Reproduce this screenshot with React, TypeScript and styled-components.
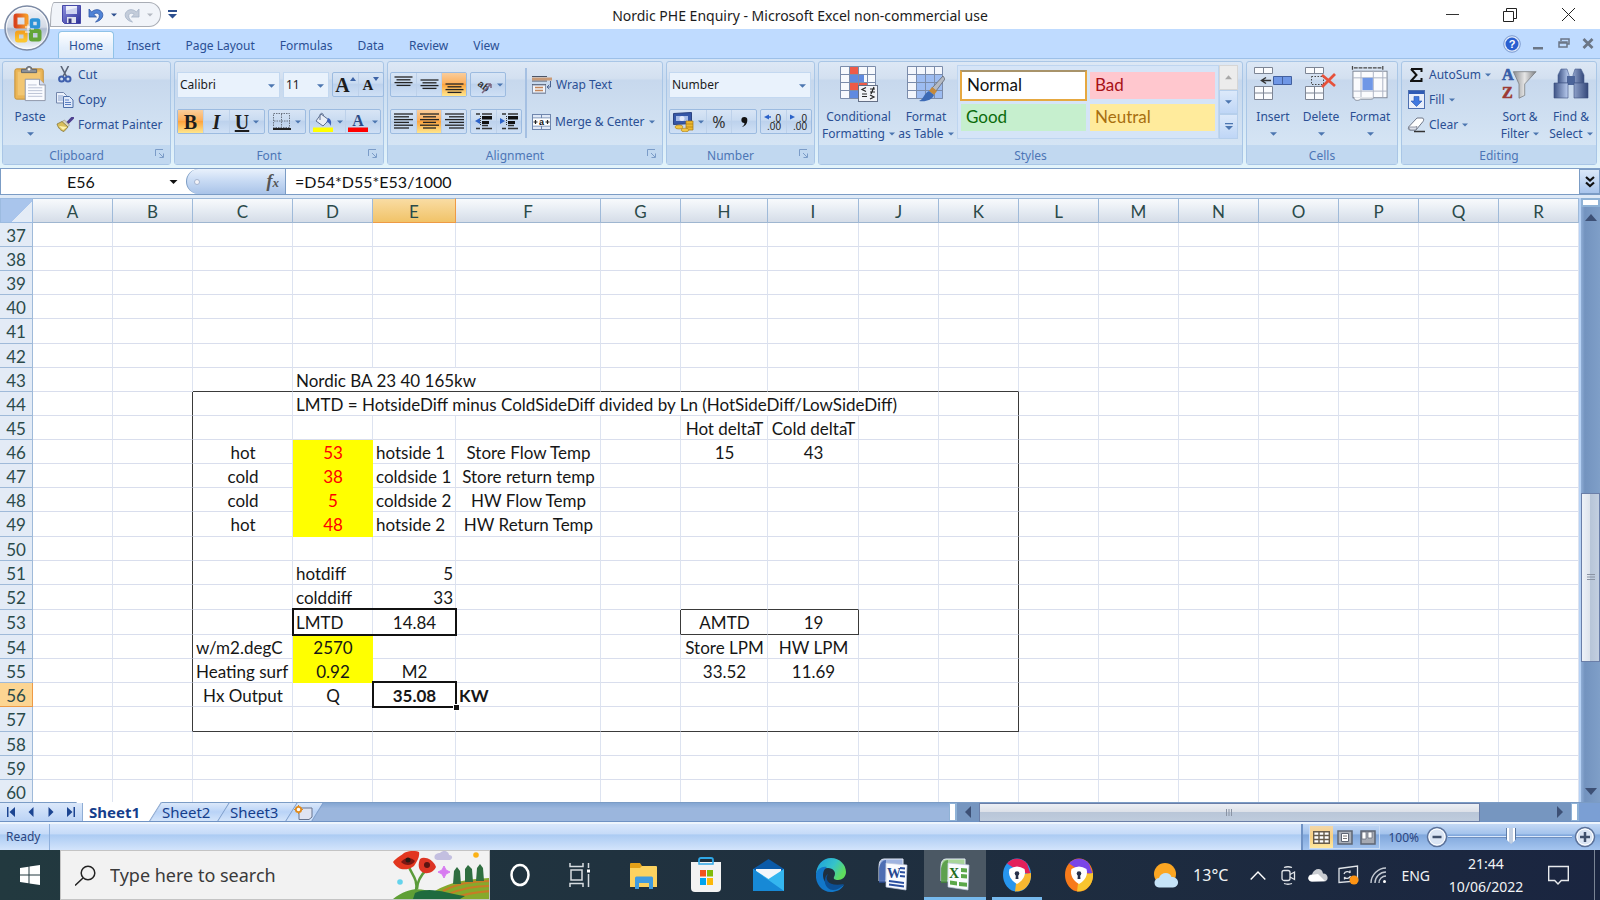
import React from 'react';
import styled, { createGlobalStyle, css } from 'styled-components';

const UI = '"Noto Sans", "Open Sans", sans-serif';
const SHEET = 'Lato, "Liberation Sans", sans-serif';

const GlobalStyle = createGlobalStyle`
  *, *::before, *::after { box-sizing: border-box; }
  body { margin: 0; font-family: ${UI}; font-size: 12px; color: #1e3f7c; background: #fff; }
  button, input, select { font: inherit; color: inherit; margin: 0; padding: 0; border: 0; background: none; border-radius: 0; outline: none; }
  button { cursor: default; }
  svg { display: block; flex: none; }
`;

const Window = styled.div`
  display: flex;
  flex-direction: column;
  height: 100vh;
  min-width: 1200px;
  overflow: hidden;
`;

/* ---------- title bar ---------- */
const TitleBar = styled.header`
  position: relative;
  display: flex;
  align-items: center;
  justify-content: space-between;
  height: 29px;
  flex: none;
  background: #fff;
`;
const OfficeButton = styled.button`
  position: absolute;
  z-index: 2;
  left: 4px;
  top: 5px;
  width: 46px;
  height: 46px;
`;
const QuickAccess = styled.div`
  display: flex;
  align-items: center;
  width: 177px;
  padding-left: 50px;
`;
const QuickPill = styled.div`
  display: flex;
  align-items: center;
  gap: 7px;
  width: 111px;
  height: 25px;
  padding-left: 11px;
  margin-right: 7px;
  background: #f1f4f9;
  border: 1px solid #a9adb5;
  border-radius: 4px 12px 12px 0 / 24px 12px 12px 0;
`;
const PlainButton = styled.button`
  display: flex;
  align-items: center;
  justify-content: center;
`;
const WindowTitle = styled.h1`
  flex: 1;
  margin: 0;
  padding-top: 2px;
  font-size: 14px;
  font-weight: 400;
  line-height: 24px;
  text-align: center;
  color: #1c1c1c;
  white-space: nowrap;
`;
const CaptionButtons = styled.div`
  display: flex;
  padding-right: 3px;
  button { width: 58px; height: 28px; }
`;

/* ---------- ribbon tabs ---------- */
const TabBar = styled.nav`
  display: flex;
  justify-content: space-between;
  height: 29px;
  flex: none;
  padding-left: 58px;
  background: #bfdbff;
`;
const TabList = styled.div`
  display: flex;
  gap: 1px;
  padding-top: 2px;
`;
const RibbonTab = styled.button<{ $active?: boolean }>`
  padding: 2px 12px 0;
  line-height: 24px;
  color: #2a4f94;
  ${p => p.$active && css`
    padding: 2px 10px 0;
    background: linear-gradient(#fff, #e3eefb 60%, #dbe8f8);
    border: 1px solid #90c3e8;
    border-bottom: 0;
    border-radius: 4px 4px 0 0;
  `}
`;
const DocButtons = styled.div`
  display: flex;
  align-items: center;
  gap: 12px;
  padding-right: 6px;
`;

/* ---------- ribbon ---------- */
const Ribbon = styled.section`
  display: flex;
  gap: 3px;
  flex: none;
  padding: 2px 3px 3px 2px;
  background: linear-gradient(#d4e4f6, #c9dbf0 20%, #e3f4fb);
  border-top: 1px solid #9dc0e8;
  border-bottom: 1px solid #7f9fc8;
`;
const Group = styled.div<{ $w?: number }>`
  display: flex;
  flex-direction: column;
  ${p => p.$w ? css`flex: 0 0 ${p.$w}px;` : css`flex: 1 1 0;`}
  min-width: 0;
  border: 1px solid #a9c6e6;
  border-radius: 3px;
  background: linear-gradient(#dde8f5, #d3e0f0 16%, #c7d8ed 18%, #d9e8f6);
`;
const GroupBody = styled.div<{ $tools?: boolean }>`
  display: flex;
  height: 83px;
  padding: ${p => (p.$tools ? '10px 2px 0' : '0 3px')};
`;
const GroupLabel = styled.div<{ $launch?: boolean }>`
  display: flex;
  align-items: center;
  justify-content: center;
  position: relative;
  height: 19px;
  padding: 2px ${p => (p.$launch ? 20 : 0)}px 0 0;
  line-height: 17px;
  color: #4d76b6;
  background: #c1d8f0;
`;
const Launcher = styled.button`
  position: absolute;
  right: 5px;
  top: 4px;
`;
const Stack = styled.div<{ $gap?: number }>`
  display: flex;
  flex-direction: column;
  gap: ${p => p.$gap ?? 0}px;
`;
const ToolRow = styled.div`
  display: flex;
  gap: 3px;
  height: 25px;
`;
const BigButton = styled.button<{ $w: number }>`
  display: flex;
  flex-direction: column;
  align-items: center;
  width: ${p => p.$w}px;
  padding-top: 4px;
  line-height: 18px;
  color: #2a4f94;
  white-space: nowrap;
  > svg { height: 36px; margin-bottom: 6px; }
`;
const BigLine = styled.span`
  display: flex;
  align-items: center;
  justify-content: center;
  gap: 4px;
  height: 17px;
`;
const SmallButton = styled.button`
  display: flex;
  align-items: center;
  gap: 4px;
  height: 25px;
  padding-left: 2px;
  color: #2a4f94;
  white-space: nowrap;
`;
const SmallIcon = styled.span`
  display: flex;
  justify-content: center;
  width: 18px;
`;
const Segment = styled.div`
  display: flex;
  border: 1px solid #9cbbe0;
  border-radius: 2px;
  background: linear-gradient(#d8e5f5, #c9dbf1 45%, #bcd1ec 47%, #cfe0f5);
`;
const Tool = styled.button<{ $w?: number; $on?: boolean }>`
  display: flex;
  align-items: center;
  justify-content: center;
  gap: 4px;
  width: ${p => p.$w ?? 25}px;
  height: 100%;
  & + & { border-left: 1px solid #bdd1ea; }
  ${p => p.$on && css`background: linear-gradient(#f9cd9c, #fdb05c 45%, #fca43f 50%, #ffe68c);`}
`;
const Glyph = styled.span<{ $italic?: boolean; $underline?: boolean; $size?: number }>`
  font-family: "Liberation Serif", serif;
  font-weight: 700;
  font-size: ${p => p.$size ?? 20}px;
  line-height: 20px;
  color: #1d1d1d;
  font-style: ${p => (p.$italic ? 'italic' : 'normal')};
  text-decoration: ${p => (p.$underline ? 'underline' : 'none')};
`;
const PlainGlyph = styled.span`
  font-size: 16px;
  line-height: 24px;
  color: #333;
`;
const SelectBox = styled.div<{ $w: number }>`
  position: relative;
  width: ${p => p.$w}px;
  height: 26px;
  background: #e9f2fc;
  border: 1px solid #c3d8f0;
  select {
    appearance: none;
    width: 100%;
    height: 22px;
    padding-left: 2px;
    font-size: 12px;
    color: #1c1c1c;
  }
  svg { position: absolute; right: 4px; top: 11px; pointer-events: none; }
`;
const Divider = styled.div`
  width: 2px;
  height: 70px;
  margin: -4px 3px 0;
  background: #a5c0e2;
`;
const Gallery = styled.div`
  display: grid;
  flex: 1;
  grid-template-columns: 1fr 1fr;
  grid-auto-rows: 31px;
  gap: 1px 2px;
  height: 74px;
  margin: 3px 0 0;
  padding: 4px 2px;
  border: 1px solid #bed5f0;
  background: #d5e4f7;
`;
const StyleSwatch = styled.button<{ $bg: string; $fg: string; $on?: boolean }>`
  margin: 2px 1px;
  padding: 0 0 2px 5px;
  text-align: left;
  font-family: ${SHEET};
  font-size: 17px;
  background: ${p => p.$bg};
  color: ${p => p.$fg};
  ${p => p.$on && css`margin: 0; border: 2px solid #e6a840; border-top-color: #a8936a;`}
`;
const GalleryScroll = styled.div`
  display: grid;
  grid-template-rows: repeat(3, 1fr);
  width: 19px;
  height: 74px;
  margin: 3px 1px 0 0;
  button { border: 1px solid #b6cfec; background: linear-gradient(#dce9fa, #bfd6f6); }
  button:first-child { background: #ececec; border-color: #d6d6d6; }
`;

/* ---------- formula bar ---------- */
const FormulaBar = styled.section`
  display: flex;
  height: 26px;
  flex: none;
  font-family: ${SHEET};
  font-size: 16px;
  color: #111;
  background: #fff;
  border-bottom: 1px solid #7b9cc5;
`;
const NameBox = styled.div`
  display: flex;
  align-items: center;
  width: 186px;
  border-left: 1px solid #7b9cc5;
  input { width: 160px; text-align: center; }
  button { width: 26px; height: 24px; }
  svg { margin: auto; }
`;
const FxArea = styled.div`
  display: flex;
  align-items: center;
  justify-content: space-between;
  width: 100px;
  padding: 0 6px 0 7px;
  border: 1px solid #7b9cc5;
  border-width: 0 1px;
  border-radius: 13px 0 0 13px;
  background: linear-gradient(#e9f1fc, #c6d9f3 50%, #a9c3e8);
`;
const FxKnob = styled.span`
  width: 6px;
  height: 6px;
  border-radius: 50%;
  background: #f4f4f8;
  border: 1px solid #a5b4cf;
`;
const FxButton = styled.button`
  font-family: "Liberation Serif", serif;
  font-style: italic;
  font-weight: 700;
  font-size: 18px;
  line-height: 20px;
  color: #555;
  small { font-size: 13px; }
`;
const FormulaInput = styled.input`
  flex: 1;
  && { padding-left: 9px; }
`;
const ExpandButton = styled.button`
  && { width: 21px; border: 1px solid #7b9cc5; background: linear-gradient(#dbe8f9, #a9c5ec); }
  svg { margin: auto; }
`;

/* ---------- worksheet ---------- */
const SheetArea = styled.main`
  display: flex;
  flex: 1;
  min-height: 0;
  padding-top: 3px;
  background: #dfeaf7;
`;
const GridPane = styled.div`
  flex: 1;
  min-width: 0;
  overflow: hidden;
  background: #fff;
`;
const Grid = styled.table`
  width: 1579px;
  table-layout: fixed;
  border-collapse: separate;
  border-spacing: 0;
  font-family: ${SHEET};
  font-size: 17px;
  line-height: 20px;
  color: #161616;
  th, td { padding: 2px 0 0; font-weight: 400; }
`;
const Corner = styled.th`
  height: 25px;
  background: linear-gradient(135deg, #a9c5ec 62%, #e4ecf6 62%);
  border: 1px solid #9cbbe0;
`;
const ColHead = styled.th<{ $on?: boolean }>`
  height: 25px;
  color: #2b4a4a;
  background: linear-gradient(#f8fafc, #e6ecf3 50%, #d5dde8);
  border-top: 1px solid #9cb8d8;
  border-right: 1px solid #9fbad9;
  border-bottom: 1px solid #9fb6d0;
  ${p => p.$on && css`
    background: linear-gradient(#f9dca3, #f1c368);
    border-bottom-color: #ee9a45;
    border-right-color: #ee9a45;
  `}
`;
const Row = styled.tr<{ $h: number }>`
  height: ${p => p.$h}px;
`;
const RowHead = styled.th<{ $on?: boolean }>`
  color: #2b4a4a;
  background: #e3ebf6;
  border-right: 1px solid #9fbad9;
  border-bottom: 1px solid #9fbad9;
  ${p => p.$on && css`background: #fcd592; border-color: #ee9a45;`}
`;
type CellProps = { $align?: string; $fill?: boolean; $red?: boolean; $bold?: boolean; $right?: string; $bottom?: string; $frame?: string };
const Cell = styled.td<CellProps>`
  position: relative;
  white-space: nowrap;
  text-align: ${p => p.$align ?? 'center'};
  font-weight: ${p => (p.$bold ? 700 : 400)} !important;
  color: ${p => (p.$red ? '#f00' : 'inherit')};
  background: ${p => (p.$fill ? '#ff0' : '#fff')};
  border-right: 1px solid ${p => p.$right ?? (p.$fill ? '#ff0' : '#dde3f0')};
  border-bottom: 1px solid ${p => p.$bottom ?? (p.$fill ? '#ff0' : '#d9deed')};
  && { padding: 2px 2px 0 3px; }
  ${p => p.$frame && css`
    &::after {
      content: '';
      position: absolute;
      z-index: 1;
      inset: -2px -2px -2px ${p.$frame === 'right' ? '0' : '-1px'};
      border: solid #111;
      border-width: 2px ${p.$frame === 'left' ? 0 : 2}px 2px ${p.$frame === 'right' ? 0 : 2}px;
    }
  `}
`;
const FillHandle = styled.span`
  position: absolute;
  z-index: 2;
  right: -4px;
  bottom: -4px;
  width: 5px;
  height: 5px;
  background: #111;
  outline: 1px solid #fff;
`;

/* ---------- scroll bars ---------- */
const VScroll = styled.div`
  display: flex;
  flex-direction: column;
  width: 21px;
  border-left: 2px solid #b7d2f5;
  background: linear-gradient(90deg, #8fadd5, #7393bf 20%, #7f9fc8);
`;
const VSplit = styled.div`
  height: 9px;
  border: 2px solid #8fb2d6;
  background: #fff;
`;
const ArrowButton = styled.button`
  display: flex;
  align-items: center;
  justify-content: center;
  width: 20px;
  height: 22px;
`;
const Track = styled.div<{ $n: number }>`
  flex: ${p => p.$n} 1 0;
`;
const VThumb = styled(Track)`
  display: flex;
  align-items: center;
  justify-content: center;
  border: 1px solid #6a7ea8;
  background: linear-gradient(90deg, #eef2f8, #dfe4ec 45%, #b7c5d8 50%, #c3cfe0);
`;
const HThumb = styled(VThumb)`
  height: 19px;
  background: linear-gradient(#eceff4, #dde1e9 45%, #b9c6d8 50%, #bfccdd);
`;
const SheetBar = styled.nav`
  display: flex;
  height: 20px;
  flex: none;
  border-top: 1px solid #7b9cc5;
  border-bottom: 1px solid #6f92c4;
  background: linear-gradient(#84a6d2, #9bb6dd 30%);
  ${ArrowButton} { height: 18px; }
`;
const TabsPane = styled.div`
  display: flex;
  flex: 949 1 0;
`;
const SheetNav = styled.div`
  display: flex;
  position: relative;
  z-index: 3;
  width: 83px;
  padding-left: 1px;
  background: linear-gradient(#dbe8fa, #bbd3f5);
  border-right: 1px solid #8fadd5;
`;
const SheetTab = styled.button<{ $active?: boolean; $w: number }>`
  position: relative;
  width: ${p => p.$w}px;
  z-index: ${p => (p.$active ? 2 : 1)};
  font-size: 15px;
  line-height: 18px;
  font-weight: ${p => (p.$active ? 700 : 400)};
  color: #153e8c;
  text-align: left;
  && { padding-left: 6px; }
  &::before {
    content: '';
    position: absolute;
    z-index: -1;
    inset: ${p => (p.$active ? '-1px 0 0 -12px' : '0')};
    transform: skewX(-32deg);
    background: ${p => (p.$active ? '#fff' : 'linear-gradient(#dbe8fa, #b9d3f7 50%, #d3e4fa)')};
    border-right: 1px solid #7f9fcc;
  }
`;
const NewSheetTab = styled(SheetTab)`
  && { padding-left: 2px; }
`;
const HScroll = styled.div`
  display: flex;
  flex: 630 1 0;
  background: #7696c0;
  ${ArrowButton} { width: 22px; }
`;
const HSplit = styled.div`
  width: 8px;
  border: 1px solid #8fb2d6;
  border-right-width: 2px;
  background: #fff;
`;
const ScrollCorner = styled.div`
  width: 21px;
  background: #7b9fd4;
`;

/* ---------- status bar ---------- */
const StatusBar = styled.footer`
  display: flex;
  justify-content: space-between;
  height: 28px;
  flex: none;
  color: #2a4580;
  border-top: 2px solid #eef5fd;
  background: linear-gradient(#d9e7fc, #c6dbf8 38%, #abcbf3 42%, #d3e4fb);
`;
const StatusText = styled.div`
  width: 50px;
  padding-left: 6px;
  line-height: 26px;
  border-right: 1px solid #8fb0dc;
`;
const ZoomArea = styled.div`
  display: flex;
  align-items: center;
  padding: 0 4px 0 6px;
  border-left: 2px solid #6f92c4;
  background: linear-gradient(#c3d8f5, #a4c3ec 38%, #80a7dc 42%, #a5c5ef);
`;
const ViewButtons = styled.div`
  display: flex;
  height: 24px;
  margin-right: 8px;
  border: 1px solid #c9dcf5;
`;
const ViewButton = styled.button<{ $on?: boolean }>`
  display: flex;
  align-items: center;
  justify-content: center;
  width: 23px;
  ${p => p.$on && css`&& { background: linear-gradient(#f3d7a8, #f8cf7e 50%, #ffe9a0); }`}
`;
const ZoomButton = styled.button`
  width: 22px;
  height: 22px;
  && { margin-left: 2px; }
  &&:first-of-type { margin-left: 7px; }
`;
const ZoomSlider = styled.input`
  appearance: none;
  width: 124px;
  height: 22px;
  &::-webkit-slider-runnable-track {
    height: 2px;
    background: #dbe8fa;
    border-bottom: 1px solid #6e8fc0;
  }
  &::-webkit-slider-thumb {
    appearance: none;
    width: 10px;
    height: 16px;
    margin-top: -8px;
    background: linear-gradient(90deg, #56749f 1px, #fff 1px 3px, #c2cfe2 3px 7px, #fff 7px 9px, #56749f 9px);
    clip-path: polygon(0 0, 100% 0, 100% 70%, 50% 100%, 0 70%);
  }
`;

/* ---------- taskbar ---------- */
const Taskbar = styled.footer`
  display: flex;
  justify-content: space-between;
  height: 50px;
  flex: none;
  color: #f1f3f5;
  background: linear-gradient(90deg, #22393f, #1f2f3f 55%, #1a2540);
`;
const TaskGroup = styled.div`
  display: flex;
  align-items: center;
`;
const TaskButton = styled.button<{ $w: number; $line?: boolean; $on?: boolean }>`
  position: relative;
  display: flex;
  align-items: center;
  justify-content: center;
  width: ${p => p.$w}px;
  height: 50px;
  ${p => p.$on && css`&& { background: #4b5864; }`}
  ${p => p.$line && css`
    &::after {
      content: '';
      position: absolute;
      left: ${p.$on ? 0 : 6}px;
      right: ${p.$on ? 0 : 6}px;
      bottom: 0;
      height: 3px;
      background: #76b9ed;
    }
  `}
`;
const SearchBox = styled.label`
  display: flex;
  align-items: center;
  width: 430px;
  height: 50px;
  padding-left: 14px;
  background: #f2f2f2;
  border: 1px solid #c4c4c4;
  input {
    flex: 1;
    min-width: 0;
    padding-left: 14px;
    font-size: 18px;
    color: #333;
  }
  input::placeholder { color: #3a3a3a; opacity: 1; }
`;
const Weather = styled.button`
  display: flex;
  align-items: center;
  gap: 14px;
  margin-right: 15px;
  font-size: 16px;
`;
const Tray = styled.div`
  display: flex;
  align-items: center;
  button { display: flex; justify-content: center; width: 30px; }
`;
const Lang = styled.span`
  margin: 0 12px 0 8px;
  font-size: 14px;
`;
const Clock = styled.div`
  width: 88px;
  margin-right: 18px;
  font-size: 14px;
  line-height: 23px;
  text-align: center;
`;
const ShowDesktop = styled.div`
  width: 6px;
  height: 50px;
  margin-left: 25px;
  border-left: 1px solid #7a8494;
`;

/* ---------- icons ---------- */
const Caret = ({ c = '#4c76b0', w = 7 }: { c?: string; w?: number }) => (
  <svg width={w} height="4" viewBox="0 0 8 4"><path d="M0 0h8L4 4z" fill={c} /></svg>
);
const CaretMark = styled.svg`
  align-self: flex-start;
  margin: 4px 0 0 -4px;
`;
const CaseCaret = ({ up }: { up?: boolean }) => (
  <CaretMark width="6" height="4" viewBox="0 0 6 4"><path d={up ? 'M0 4h6L3 0z' : 'M0 0h6L3 4z'} fill="#3c62a5" /></CaretMark>
);
const Arrow = ({ d, c = '#3d5075', s = 12 }: { d: 'u' | 'd' | 'l' | 'r'; c?: string; s?: number }) => {
  const p = { u: 'M0 9h12L6 2z', d: 'M0 3h12L6 10z', l: 'M9 0v12L3 6z', r: 'M3 0v12l6-6z' }[d];
  return <svg width={s} height={s} viewBox="0 0 12 12"><path d={p} fill={c} /></svg>;
};
const LaunchIcon = () => (
  <svg width="10" height="10" viewBox="0 0 10 10" fill="none" stroke="#7b9cc8"><path d="M.5 7V.5H8M4 4l4 4M8.500 4.500v4h-4" /></svg>
);
const OfficeLogo = () => (
  <svg width="46" height="46" viewBox="0 0 46 46">
    <defs>
      <linearGradient id="orb" x2="0" y2="1"><stop offset="0" stopColor="#f4f6fa" /><stop offset=".48" stopColor="#d3dae6" /><stop offset=".52" stopColor="#aebbd0" /><stop offset="1" stopColor="#f6f9fd" /></linearGradient>
      <linearGradient id="o1"><stop offset="0" stopColor="#d9431c" /><stop offset="1" stopColor="#f59a2a" /></linearGradient>
      <linearGradient id="o2" x2="0" y2="1"><stop offset="0" stopColor="#f4a21f" /><stop offset="1" stopColor="#fcc62f" /></linearGradient>
    </defs>
    <circle cx="23" cy="23" r="22" fill="url(#orb)" stroke="#7d8ba5" strokeWidth="1.500" />
    <circle cx="23" cy="23" r="20.500" fill="none" stroke="#fff" opacity=".8" />
    <rect x="11.500" y="10.500" width="11" height="11" rx="1" fill="none" stroke="url(#o1)" strokeWidth="4" />
    <rect x="27.500" y="15" width="7" height="7" rx="1" fill="none" stroke="#2d93d6" strokeWidth="3.500" />
    <rect x="13" y="27.500" width="8.500" height="8" rx="1" fill="none" stroke="url(#o2)" strokeWidth="4" />
    <rect x="27" y="26" width="8.500" height="8.500" rx="1" fill="none" stroke="#63a537" strokeWidth="4" />
    <path d="M21 22h5M24 19.500v6M27 24h3M21 27h5" stroke="#fff" strokeWidth="1" />
  </svg>
);
const SaveIcon = () => (
  <svg width="19" height="19" viewBox="0 0 19 19">
    <defs><linearGradient id="sv" x2="1" y2="1"><stop offset="0" stopColor="#8f92e0" /><stop offset="1" stopColor="#2b2f96" /></linearGradient></defs>
    <path d="M.5.5h18v18h-16l-2-2z" fill="url(#sv)" stroke="#4648a8" /><path d="M4 1h11v8H4z" fill="#eef0fb" /><path d="M4 5.500l11-3V9H4z" fill="#cfd4f0" /><path d="M5 12h9v6H5z" fill="#dfe2ee" /><path d="M6.500 13.500h3V18h-3z" fill="#34377f" />
  </svg>
);
const UndoIcon = () => (
  <svg width="16" height="16" viewBox="0 0 16 16"><path d="M1 2v8h7.500L5.800 7.400C8 5.500 11 6 11.300 8.600 11.500 11 10 13 7.500 15c4.500-1 7.500-4 7.300-7.300C14.500 3 8 .5 3.600 5z" fill="#4f83d6" stroke="#2d55a3" strokeWidth=".8" /></svg>
);
const RedoIcon = () => (
  <svg width="16" height="16" viewBox="0 0 16 16"><path d="M15 2v8H7.500l2.700-2.600C8 5.500 5 6 4.700 8.600 4.500 11 6 13 8.500 15 4 14 1 11 1.200 7.700 1.500 3 8 .5 12.400 5z" fill="#c3ccda" stroke="#a5b2c6" strokeWidth=".8" /></svg>
);
const PasteIcon = () => (
  <svg width="36" height="38" viewBox="0 0 36 38">
    <rect x="2" y="3" width="30" height="32" rx="2" fill="#eab557" stroke="#c48f35" /><path d="M5 6h24v25H5z" fill="#f2c672" />
    <path d="M9 7V3.500h5a3 3 0 0 1 6 0h5V7z" fill="#8c9097" stroke="#5f646c" /><circle cx="17" cy="3.500" r="1.300" fill="#fff" />
    <path d="M13 14h15l6 6v16.500H13z" fill="#fafbff" stroke="#8d95a8" /><path d="M28 14v6h6" fill="#d8def0" stroke="#8d95a8" />
    <path d="M16 20h9M16 23h15M16 26h15M16 29h15M16 32h15" stroke="#b9c1d4" />
  </svg>
);
const CutIcon = () => (
  <svg width="14" height="17" viewBox="0 0 14 17" fill="none"><path d="M3 0l5.500 10.500M10.500 0L5 10.500" stroke="#5a6476" strokeWidth="1.600" /><circle cx="3.600" cy="13" r="2.500" stroke="#3f60ad" strokeWidth="2" /><circle cx="10" cy="13" r="2.500" stroke="#3f60ad" strokeWidth="2" /></svg>
);
const CopyIcon = () => (
  <svg width="18" height="17" viewBox="0 0 18 17"><path d="M.5 1.500h7l3 3V12H.5z" fill="#eaf0fb" stroke="#7487ac" /><path d="M2 5h5M2 7h5M2 9h5" stroke="#8ea6cf" /><path d="M7.500 5.500h6l3.500 3.500v7.500H7.500z" fill="#dfe9fa" stroke="#4d6fa9" /><path d="M9 9h4M9 11.500h6M9 13.500h6" stroke="#5c80c2" /></svg>
);
const PainterIcon = () => (
  <svg width="18" height="15" viewBox="0 0 18 15"><path d="M16.500 1l-5 5" stroke="#4d3f8f" strokeWidth="3" strokeLinecap="round" /><path d="M8.500 3l5 5-2 2-6-5z" fill="#d9d4c0" stroke="#8f8a6c" strokeWidth=".6" /><path d="M1 7l5-2.500 6 5.500-4 4.500C5 14 2 11 1 7z" fill="#d9bf5a" stroke="#7d6d30" strokeWidth=".7" /><path d="M3 9l4 4 4-3z" fill="#fff3b0" /></svg>
);
const BorderIcon = () => (
  <svg width="18" height="17" viewBox="0 0 18 17" fill="none" stroke="#6b7482" strokeDasharray="1.500 1"><path d="M.5.5h16v14H.5zM8.500 1v14M1 8h16" /><path d="M0 16h18" stroke="#222" strokeWidth="2" strokeDasharray="none" /></svg>
);
const FillIcon = () => (
  <svg width="20" height="20" viewBox="0 0 20 20"><path d="M8 2l8 6-6 6-7-5z" fill="#e8edf6" stroke="#5f7091" /><path d="M7 8V3.500C7 .5 10.500.5 10.500 4" fill="none" stroke="#5f7091" /><path d="M15 6c3 1 4 4 2.500 8-1-3-2-4-4-4z" fill="#3d62b8" /><path d="M0 15.500h20V20H0z" fill="#ff0" /></svg>
);
const FontColorIcon = () => (
  <svg width="20" height="20" viewBox="0 0 20 20"><path d="M0 15.500h20V20H0z" fill="#f00" /><text x="10" y="14" textAnchor="middle" fontFamily="Liberation Serif" fontWeight="700" fontSize="16" fill="#2c4a86">A</text></svg>
);
const Lines = ({ l, y, c = 1 }: { l: number[]; y: number; c?: number }) => (
  <svg width="19" height="19" viewBox="0 0 19 19" stroke="#242424" strokeWidth="1.300">
    {l.map((w, i) => { const x = c === 0 ? 0 : c === 1 ? (19 - w) / 2 : 19 - w; return <path key={i} d={`M${x} ${y + i * 2.8}h${w}`} />; })}
  </svg>
);
const OrientIcon = () => (
  <svg width="20" height="20" viewBox="0 0 20 20"><text transform="translate(4 10) rotate(38)" fontFamily="Liberation Sans" fontWeight="700" fontSize="10" fill="#333">ab</text><path d="M9 18l9-9m0 0h-4m4 0v4" stroke="#7b6580" strokeWidth="1.500" fill="none" /></svg>
);
const IndentIcon = ({ r }: { r?: boolean }) => (
  <svg width="19" height="17" viewBox="0 0 19 17"><path d="M2 1h4M8 1h10M2 15.500h4M8 15.500h10M8 12.500h6" stroke="#333" strokeWidth="1.300" /><path d="M8 3h10v3.500H8zM8 8h7v3H8z" fill="#111" /><path d="M6.500 3v10" stroke="#333" strokeDasharray="1 1" /><path d={r ? 'M0 5l5 3-5 3z' : 'M6 5L1 8l5 3z'} fill="#2b62c9" /></svg>
);
const WrapIcon = () => (
  <svg width="20" height="19" viewBox="0 0 20 19"><path d="M0 1.500h15M0 6h15M0 9.500h14M0 18h14" stroke="#4b5568" /><path d="M0 2.500h20v3H0z" fill="#c89a77" /><path d="M.5 10h13v8H.5z" fill="#f1f3f7" stroke="#8592ab" /><path d="M3 12.500h8M3 15.500h8" stroke="#c2855a" strokeWidth="1.500" /><path d="M18.500 6v6h-3m1.800-2.200L15 12l2.300 2" fill="none" stroke="#4a628f" /></svg>
);
const MergeIcon = () => (
  <svg width="19" height="16" viewBox="0 0 19 16"><rect x=".5" y=".5" width="18" height="15" fill="#dfe8f6" stroke="#6f86ad" /><path d="M9.500 1v3M9.500 12v3M1 4h17M1 12h17" stroke="#6f86ad" /><path d="M1 4.500h17v7H1z" fill="#fff" /><path d="M1.500 8h4M3.500 6v4M13.500 8h4M15.500 6v4" stroke="#222" strokeWidth="1.200" /><text x="9.500" y="11" textAnchor="middle" fontFamily="Liberation Sans" fontWeight="700" fontSize="9" fill="#111">a</text></svg>
);
const MoneyIcon = () => (
  <svg width="21" height="20" viewBox="0 0 21 20"><path d="M.5 1.500l18-1v11l-18 1z" fill="#3557a8" stroke="#2c4380" /><path d="M3 4h12v5H3z" fill="#a7bce8" /><circle cx="9" cy="6.500" r="2.500" fill="#e3eafb" /><path d="M13 9h7v9h-7z" fill="#edb92e" stroke="#a97a15" strokeWidth=".7" /><path d="M13 12h7M13 15h7" stroke="#a97a15" strokeWidth=".7" /><ellipse cx="6" cy="15" rx="4" ry="2" fill="#f2c643" stroke="#a97a15" strokeWidth=".6" /><ellipse cx="12" cy="18" rx="4" ry="1.800" fill="#f2c643" stroke="#a97a15" strokeWidth=".6" /></svg>
);
const DecimalIcon = ({ r }: { r?: boolean }) => (
  <svg width="19" height="18" viewBox="0 0 19 18" fontFamily="Liberation Sans" fontSize="10" fill="#222"><path d={r ? 'M0 1.500l5 2.500-5 2.500z' : 'M5 1.500L0 4l5 2.500zM5 3.300h2v1.400H5z'} fill="#2b62c9" /><text x="17" y="8.500" textAnchor="end">.0</text><text x="17" y="17" textAnchor="end">.00</text></svg>
);
const GridLines = () => <path d="M.5.500h35v32H.5zM9.500.5v32M18.500.5v32M27.500.5v32M0 8.500h36M0 16.500h36M0 24.500h36" fill="none" stroke="#7b8cab" />;
const CondIcon = () => (
  <svg width="38" height="36" viewBox="0 0 38 36"><path d="M.5.5h35v32H.5z" fill="#f7f9fd" /><path d="M9 1h9v8H9zM9 16h18v8H9z" fill="#ee5a48" /><path d="M9 9h15v8H9zM9 25h9v8H9z" fill="#5f8ae0" /><GridLines /><rect x="18.500" y="19.500" width="19" height="16" fill="#f1f3f8" stroke="#646f85" /><path d="M26 21.500l-4 2 4 2M22 28h5M22 30.500h5M30 23h5M30 26h5M34 21l-3 7M30 29l4 2-4 2" fill="none" stroke="#222" strokeWidth="1.200" /></svg>
);
const TableIcon = () => (
  <svg width="38" height="36" viewBox="0 0 38 36"><path d="M.5.5h35v32H.5z" fill="#f3f6fc" /><path d="M9 8h27v25H9z" fill="#9dbcf1" /><GridLines /><path d="M36 10l2 3-9 12-4-3z" fill="#b5bac3" stroke="#60666f" strokeWidth=".8" /><path d="M25 21l5 4-3 4-5-4z" fill="#c58a3b" /><path d="M22 25l5 4c-2 5-8 7-15 6 5-2 5-8 10-10z" fill="#3c6ab5" /></svg>
);
const CellBlock = () => <path d="M.5 20.500h18v13H.5zM.5 27h18M9.500 20.500v13M.5 1.500h18v6H.5zM9.500 1.500v6" fill="#fafbfd" stroke="#7d8594" />;
const InsertIcon = () => (
  <svg width="38" height="36" viewBox="0 0 38 36"><CellBlock /><path d="M19.500 10.500h18v8h-18zM28.500 10.500v8" fill="#6f97e6" stroke="#42609f" /><path d="M17 14.500H8m4-3l-4.500 3L12 17.500" fill="none" stroke="#333" strokeWidth="1.500" /></svg>
);
const DeleteIcon = () => (
  <svg width="32" height="36" viewBox="0 0 32 36"><CellBlock /><path d="M6.500 10.500h12v8h-12z" fill="none" stroke="#444" strokeDasharray="1.500 1.500" /><path d="M17 9l13 11M30 8L17 21" stroke="#e6513b" strokeWidth="2.800" /></svg>
);
const FormatIcon = () => (
  <svg width="38" height="38" viewBox="0 0 38 38"><path d="M.5 0v4M2 2h30M32.500 0v4" stroke="#444" strokeWidth="1.300" strokeDasharray="4 1" /><rect x="1" y="5.500" width="36" height="28" fill="#fafbfd" stroke="#7d8594" /><path d="M1 12.500h36M1 26.500h36M9.500 5v28M22.500 5v28M32.500 5v28" stroke="#aab2c2" /><path d="M11 12.500h11v13H11z" fill="#6f97e6" /><path d="M2 33c0 4 5 4 7 2h11c3 0 3-2 3-2" fill="#fafbfd" stroke="#7d8594" /></svg>
);
const SumIcon = () => (
  <svg width="13" height="14" viewBox="0 0 13 14"><path d="M1 1h10.500v3M1 1l5.500 6L1 13h10.500v-3" fill="none" stroke="#111" strokeWidth="2" /></svg>
);
const FillDownIcon = () => (
  <svg width="17" height="19" viewBox="0 0 17 19"><rect x=".5" y=".5" width="16" height="18" fill="#e9effb" stroke="#4d6fb0" /><path d="M1 1h15v3H1z" fill="#2f5bb5" /><path d="M6 6.500h5V11h3l-5.500 5.500L3 11h3z" fill="#3f78e0" stroke="#2a55ad" strokeWidth=".6" /></svg>
);
const EraserIcon = () => (
  <svg width="18" height="16" viewBox="0 0 18 16"><path d="M10 1h5c2 0 2 2 1 3.500L9 13H3c-2 0-2-2-1-3.500z" fill="#fff" stroke="#6e7687" /><path d="M1.500 10h6.500l2-.5L9 13H3z" fill="#dde1ea" stroke="#6e7687" strokeWidth=".7" /><path d="M7 14.500h11" stroke="#333" strokeWidth="1.500" /></svg>
);
const SortIcon = () => (
  <svg width="37" height="38" viewBox="0 0 37 38"><defs><linearGradient id="fn"><stop offset="0" stopColor="#8b8d90" /><stop offset=".5" stopColor="#e6e6e6" /><stop offset="1" stopColor="#7c7e81" /></linearGradient></defs><text x="0" y="15" fontFamily="Liberation Serif" fontWeight="700" fontSize="17" stroke="#3a5fa8" strokeWidth=".7" fill="#3a5fa8">A</text><text x="0" y="34" fontFamily="Liberation Serif" fontWeight="700" fontSize="17" stroke="#9c3a34" strokeWidth=".7" fill="#9c3a34">Z</text><path d="M12 6h24L24 19v12l-6 3V19z" fill="url(#fn)" stroke="#77797c" strokeWidth=".8" /></svg>
);
const FindIcon = () => (
  <svg width="36" height="36" viewBox="0 0 36 36"><defs><linearGradient id="bn"><stop offset="0" stopColor="#3e5486" /><stop offset=".4" stopColor="#b5c8ec" /><stop offset="1" stopColor="#34487a" /></linearGradient></defs><path d="M8 3h6l2 6v8H5V9zM22 3h6l3 6v8H20V9z" fill="url(#bn)" stroke="#4a5f90" strokeWidth=".6" /><path d="M14 10h8v9h-8z" fill="#4c659a" /><path d="M1 17h14v15H1zM21 17h14v15H21z" fill="url(#bn)" stroke="#394d7c" strokeWidth=".6" /></svg>
);
const ZoomIcon = ({ plus }: { plus?: boolean }) => (
  <svg width="22" height="22" viewBox="0 0 22 22"><circle cx="11" cy="11" r="9.500" fill="#dbe5f4" stroke="#5b7199" strokeWidth="1.500" /><circle cx="11" cy="11" r="8" fill="none" stroke="#fff" /><path d={plus ? 'M6 11h10M11 6v10' : 'M6.500 11h9'} stroke="#40506c" strokeWidth="2.500" /></svg>
);
const CortanaIcon = () => <svg width="22" height="26" viewBox="0 0 22 26"><ellipse cx="11" cy="13" rx="8.500" ry="10" fill="none" stroke="#fff" strokeWidth="2.500" /></svg>;
const TaskViewIcon = () => (
  <svg width="22" height="24" viewBox="0 0 22 24" fill="none" stroke="#d7dde1" strokeWidth="1.500"><path d="M1 0v3.500h13V0M1 24v-3.500h13V24M2 7h11v10H2zM19.500 0v5M19.500 11v13" /><path d="M18 8h3" strokeWidth="3" stroke="#fff" /></svg>
);
const FolderIcon = () => (
  <svg width="27" height="27" viewBox="0 0 27 27"><path d="M0 2q0-1 1-1h9l2 3h14v20H0z" fill="#e3a018" /><path d="M0 6h10l2-2h14q1 0 1 1v20H0z" fill="#fcd25f" /><path d="M5 27V16q0-1.500 1.500-1.500h15Q23 14.500 23 16v11h-4v-6H9v6z" fill="#3f9be0" /></svg>
);
const StoreIcon = () => (
  <svg width="30" height="36" viewBox="0 0 30 36"><path d="M8 9V3q0-2 2-2h10q2 0 2 2v6" fill="none" stroke="#2fa8e8" strokeWidth="1.800" /><path d="M0 5h30v26q0 4-4 4H4q-4 0-4-4z" fill="#f3f3f3" /><path d="M8 5v2h14V5" fill="none" stroke="#2fa8e8" strokeWidth="1.500" /><path d="M9 13h6v6.500H9z" fill="#f1511b" /><path d="M16 13h6v6.500h-6z" fill="#80bb0a" /><path d="M9 21h6v7H9z" fill="#00a4ef" /><path d="M16 21h6v7h-6z" fill="#fbb809" /></svg>
);
const MailIcon = () => (
  <svg width="31" height="34" viewBox="0 0 31 34"><path d="M0 11L15.500 1 31 11v5H0z" fill="#0a5aa8" /><path d="M3 11h25v10H3z" fill="#f3f6fa" /><path d="M0 11l15.500 10L31 11v22H0z" fill="#34b6ef" /><path d="M0 11l31 22H0z" fill="#1789d6" /></svg>
);
const EdgeIcon = () => (
  <svg width="32" height="36" viewBox="0 0 32 36"><defs><linearGradient id="e1" x2="1" y2=".5"><stop offset="0" stopColor="#1a9be0" /><stop offset=".6" stopColor="#36c3c9" /><stop offset="1" stopColor="#5fdc5c" /></linearGradient></defs><path d="M1 18C1 8 8 1 16 1c9 0 15 7 15 14 0 5-4 8-8 8-3 0-5-1-4-3 3-5-1-9-6-9C6 11 1 15 1 18z" fill="url(#e1)" /><path d="M1 17c1-5 6-8 11-7-4 3-5 8-3 13 3 7 11 9 20 5-3 5-8 7-13 7C7 35 0 27 1 17z" fill="#1277c9" /><path d="M13 17c-4 6 1 13 16 10-3 4-7 6-11 6-8 0-11-12-5-16z" fill="#0c4f94" /></svg>
);
const OfficeDoc = ({ k }: { k: 'W' | 'X' }) => {
  const c = k === 'W' ? '#2b4fa0' : '#3f8a2e';
  return (
    <svg width="30" height="34" viewBox="0 0 30 34"><path d="M6 1h19v22H1V9Q1 1 6 1z" fill={k === 'W' ? '#9fb4e0' : '#a8d59a'} stroke="#e6ecf8" /><path d="M1 10Q3 2 8 2L7 25H1z" fill={c} opacity=".7" /><path d="M8 5l21 2-1 25-20-3z" fill="#fafcff" stroke="#bcc6dc" strokeWidth=".7" />
      <text x="9" y="20" fontFamily="Liberation Serif" fontWeight="700" fontSize="14" fill={k === 'W' ? '#27488f' : '#1e6b1c'}>{k}</text>
      {k === 'W' ? <path d="M22 10l5 .5M22 14l5 .5M22 18l5 .5M11 23l15 2M11 26.500l15 2" stroke={c} strokeWidth="1.800" /> : <path d="M21 10l6 .5v4l-6-.5zM21 16l6 .5v4l-6-.5zM10 22.500l7 1v4l-7-1zM19 24l8 .8v4l-8-.8z" fill="#5ba84a" />}
    </svg>
  );
};
const BrowserIcon = ({ a, b, c }: { a: string; b: string; c: string }) => (
  <svg width="28" height="34" viewBox="0 0 28 34"><ellipse cx="14" cy="17" rx="14" ry="16.500" fill={a} /><path d="M4 5.500C9-1 19-1 24 5.500L28 17 14 12z" fill={b} /><path d="M28 15c1 9-5 19-16 18.500L14 17z" fill={c} /><path d="M6.500 11q7.500-5 15 0c2 6-2 12-7.500 15C8.500 23 4.500 17 6.500 11z" fill="#fff" /><circle cx="14" cy="15.500" r="2.300" fill="#27304a" /><path d="M13 16h2l.5 5h-3z" fill="#27304a" /></svg>
);
const Poppies = () => (
  <svg width="96" height="48" viewBox="0 0 96 48">
    <path d="M0 48c15-12 28-11 38-7l20 7z" fill="#5f9f35" /><path d="M40 41c20-12 40-13 57-14v21H35z" fill="#86a92c" />
    <path d="M50 40c15-8 30-10 47-10M56 43c14-6 26-8 41-8M64 46c10-4 22-5 33-6" stroke="#c77c26" strokeWidth="2.200" fill="none" />
    <path d="M22 42c15-7 30 0 50 3l-5 3H20z" fill="#1f6b3e" />
    <path d="M64 16l3 4 1 13h-8l1-13zM75 14l4 4 1 13h-8l0-13zM87 13l3 4 1 13h-8l1-13z" fill="#2f6e40" />
    <path d="M23 40C25 28 19 24 16 16M24 38c0-8 4-14 10-20" stroke="#5b9b3a" strokeWidth="2.500" fill="none" />
    <path d="M0 11C4 6 8 5 11 2c4-2 10-3 15-1 1 5-2 9-5 14C14 20 5 20 0 11z" fill="#e2371f" /><path d="M8 11c4-5 10-5 14-1-3 5-10 5-14 1z" fill="#7c1713" /><circle cx="15" cy="9" r="2.500" fill="#2a1a14" />
    <path d="M27 8c4-3 13 0 16 8-2 5-9 8-14 5-4-3-4-8-2-13z" fill="#dd3524" /><circle cx="34" cy="14" r="3" fill="#5a1512" />
    <path d="M42 8c-2-4 2-6 5-6 4-4 9-1 9 2 4 0 4 4 1 5H44z" fill="#c3bfe0" /><circle cx="83" cy="4" r="2.800" fill="#fbb217" /><circle cx="7" cy="31" r="2.800" fill="#64d3ec" /><path d="M51 15l2 4 4 2-4 2-2 4-2-4-4-2 4-2z" fill="#d77bf0" stroke="#d77bf0" />
  </svg>
);
const WeatherIcon = () => (
  <svg width="26" height="25" viewBox="0 0 26 25"><circle cx="12" cy="11" r="11" fill="#fba622" /><path d="M6 24.500C0 24 0 15.500 6 15 8 8.500 17 8.500 18.500 14 27 14 27 24 20 24.500z" fill="#c5e3f8" /></svg>
);

/* ---------- worksheet data ---------- */
const COLS: [string, number][] = [['A', 80], ['B', 80], ['C', 100], ['D', 80], ['E', 83], ['F', 145], ['G', 80], ['H', 87], ['I', 91], ['J', 80], ['K', 80], ['L', 80], ['M', 80], ['N', 80], ['O', 80], ['P', 80], ['Q', 80], ['R', 80]];
const TALL = [41, 49, 52, 53, 57];
type Data = { v: React.ReactNode; span?: number; align?: string; fill?: boolean; red?: boolean; bold?: boolean; frame?: string };
const input = (v: string): Data => ({ v, fill: true, red: true });
const left = (v: string): Data => ({ v, align: 'left' });
const CELLS: Record<string, Data> = {
  D43: { v: 'Nordic BA 23 40 165kw', align: 'left', span: 3 },
  D44: { v: 'LMTD = HotsideDiff minus ColdSideDiff divided by Ln (HotSideDiff/LowSideDiff)', align: 'left', span: 7 },
  H45: { v: 'Hot deltaT' }, I45: { v: 'Cold deltaT' },
  C46: { v: 'hot' }, D46: input('53'), E46: left('hotside 1'), F46: { v: 'Store Flow Temp' }, H46: { v: '15' }, I46: { v: '43' },
  C47: { v: 'cold' }, D47: input('38'), E47: left('coldside 1'), F47: { v: 'Store return temp' },
  C48: { v: 'cold' }, D48: input('5'), E48: left('coldside 2'), F48: { v: 'HW Flow Temp' },
  C49: { v: 'hot' }, D49: input('48'), E49: left('hotside 2'), F49: { v: 'HW Return Temp' },
  D51: left('hotdiff'), E51: { v: '5', align: 'right' },
  D52: left('colddiff'), E52: { v: '33', align: 'right' },
  D53: { v: 'LMTD', align: 'left', frame: 'left' }, E53: { v: '14.84', frame: 'right' }, H53: { v: 'AMTD' }, I53: { v: '19' },
  C54: left('w/m2.degC'), D54: { v: '2570', fill: true }, H54: { v: 'Store LPM' }, I54: { v: 'HW LPM' },
  C55: left('Heating surf'), D55: { v: '0.92', fill: true }, E55: { v: 'M2' }, H55: { v: '33.52' }, I55: { v: '11.69' },
  C56: { v: 'Hx Output' }, D56: { v: 'Q' }, E56: { v: '35.08', bold: true, frame: 'all' }, F56: { v: 'KW', bold: true, align: 'left' },
};
const INK = '#3a3a3a';
const rightInk = (c: string, r: number) =>
  ((c === 'B' || c === 'K') && r >= 44 && r <= 57) || (r === 53 && (c === 'G' || c === 'I')) ? INK : undefined;
const bottomInk = (c: string, r: number) =>
  ((r === 43 || r === 57) && c >= 'C' && c <= 'K') || ((r === 52 || r === 53) && (c === 'H' || c === 'I')) ? INK : undefined;

const SheetRow = ({ n }: { n: number }) => {
  const cells: React.ReactNode[] = [];
  for (let i = 0; i < COLS.length; i++) {
    const c = COLS[i][0];
    const d = CELLS[c + n];
    const span = d?.span ?? 1;
    cells.push(
      <Cell key={c} colSpan={span} $align={d?.align} $fill={d?.fill} $red={d?.red} $bold={d?.bold} $frame={d?.frame} $right={rightInk(c, n)} $bottom={bottomInk(c, n)}>
        {d?.v}{c + n === 'E56' && <FillHandle />}
      </Cell>,
    );
    i += span - 1;
  }
  return <Row $h={TALL.includes(n) ? 25 : 24}><RowHead scope="row" $on={n === 56}>{n}</RowHead>{cells}</Row>;
};

const Drop = ({ label, w, value }: { label: string; w: number; value: string }) => (
  <SelectBox $w={w}><select aria-label={label} defaultValue={value}><option>{value}</option></select><Caret /></SelectBox>
);
const Label = ({ children, launch }: { children: string; launch?: boolean }) => (
  <GroupLabel $launch={launch}>{children}{launch && <Launcher aria-label={`${children} options`}><LaunchIcon /></Launcher>}</GroupLabel>
);

export default function App() {
  return (
    <Window>
      <GlobalStyle />
      <TitleBar>
        <OfficeButton aria-label="Office"><OfficeLogo /></OfficeButton>
        <QuickAccess>
          <QuickPill>
            <PlainButton aria-label="Save"><SaveIcon /></PlainButton>
            <PlainButton aria-label="Undo"><UndoIcon /></PlainButton>
            <Caret c="#2d4f8f" w={6} />
            <PlainButton aria-label="Redo"><RedoIcon /></PlainButton>
            <Caret c="#b4b9c2" w={6} />
          </QuickPill>
          <PlainButton aria-label="Customize toolbar">
            <svg width="9" height="9" viewBox="0 0 9 9"><path d="M0 0h9v2H0zM0 4h9L4.500 8.500z" fill="#2d4f8f" /></svg>
          </PlainButton>
        </QuickAccess>
        <WindowTitle>Nordic PHE Enquiry - Microsoft Excel non-commercial use</WindowTitle>
        <CaptionButtons>
          <PlainButton aria-label="Minimize"><svg width="13" height="13" viewBox="0 0 13 13"><path d="M0 6.500h13" stroke="#333" /></svg></PlainButton>
          <PlainButton aria-label="Restore"><svg width="14" height="14" viewBox="0 0 14 14" fill="none" stroke="#222"><path d="M.5 3.500h10v10H.5zM3.500 3V.5h10v10H11" /></svg></PlainButton>
          <PlainButton aria-label="Close"><svg width="13" height="13" viewBox="0 0 13 13"><path d="M0 0l13 13M13 0L0 13" stroke="#222" /></svg></PlainButton>
        </CaptionButtons>
      </TitleBar>

      <TabBar>
        <TabList>
          {['Home', 'Insert', 'Page Layout', 'Formulas', 'Data', 'Review', 'View'].map(t => <RibbonTab key={t} $active={t === 'Home'}>{t}</RibbonTab>)}
        </TabList>
        <DocButtons>
          <PlainButton aria-label="Help"><svg width="18" height="18" viewBox="0 0 18 18"><circle cx="9" cy="9" r="8.300" fill="#dce7f8" stroke="#7c9bd0" /><circle cx="9" cy="9" r="6.500" fill="#2a5fd0" /><text x="9" y="13" textAnchor="middle" fontFamily="Liberation Sans" fontWeight="700" fontSize="11" fill="#fff">?</text></svg></PlainButton>
          <PlainButton aria-label="Minimize workbook"><svg width="13" height="12" viewBox="0 0 13 12"><path d="M0 9h10v2.500H0z" fill="#6b7686" /></svg></PlainButton>
          <PlainButton aria-label="Restore workbook"><svg width="12" height="11" viewBox="0 0 12 11" fill="none" stroke="#6b7686" strokeWidth="1.500"><path d="M3 3V1h8v5H9M1 4h8v5H1zM1 5h8" /></svg></PlainButton>
          <PlainButton aria-label="Close workbook"><svg width="12" height="11" viewBox="0 0 12 11"><path d="M1.500 1l9 9M10.500 1l-9 9" stroke="#6b7686" strokeWidth="2.800" /></svg></PlainButton>
        </DocButtons>
      </TabBar>

      <Ribbon>
        <Group $w={169}>
          <GroupBody>
            <BigButton $w={48}><PasteIcon /><BigLine>Paste</BigLine><BigLine><Caret /></BigLine></BigButton>
            <Stack>
              <SmallButton><SmallIcon><CutIcon /></SmallIcon>Cut</SmallButton>
              <SmallButton><SmallIcon><CopyIcon /></SmallIcon>Copy</SmallButton>
              <SmallButton><SmallIcon><PainterIcon /></SmallIcon>Format Painter</SmallButton>
            </Stack>
          </GroupBody>
          <Label launch>Clipboard</Label>
        </Group>

        <Group $w={210}>
          <GroupBody $tools>
            <Stack $gap={12}>
              <ToolRow>
                <Drop label="Font" w={103} value="Calibri" />
                <Drop label="Font size" w={46} value="11" />
                <Segment>
                  <Tool aria-label="Grow font"><Glyph>A</Glyph><CaseCaret up /></Tool>
                  <Tool aria-label="Shrink font"><Glyph $size={15}>A</Glyph><CaseCaret /></Tool>
                </Segment>
              </ToolRow>
              <ToolRow>
                <Segment>
                  <Tool $on aria-label="Bold"><Glyph>B</Glyph></Tool>
                  <Tool $w={26} aria-label="Italic"><Glyph $italic>I</Glyph></Tool>
                  <Tool $w={35} aria-label="Underline"><Glyph $underline>U</Glyph><Caret w={6} /></Tool>
                </Segment>
                <Segment><Tool $w={36} aria-label="Borders"><BorderIcon /><Caret w={6} /></Tool></Segment>
                <Segment>
                  <Tool $w={35} aria-label="Fill color"><FillIcon /><Caret w={6} /></Tool>
                  <Tool $w={35} aria-label="Font color"><FontColorIcon /><Caret w={6} /></Tool>
                </Segment>
              </ToolRow>
            </Stack>
          </GroupBody>
          <Label launch>Font</Label>
        </Group>

        <Group $w={276}>
          <GroupBody $tools>
            <Stack $gap={12}>
              <ToolRow>
                <Segment>
                  <Tool aria-label="Top align"><Lines l={[18, 14, 18, 14]} y={2} /></Tool>
                  <Tool aria-label="Middle align"><Lines l={[18, 14, 18, 14]} y={5} /></Tool>
                  <Tool $on aria-label="Bottom align"><Lines l={[18, 14, 18, 14]} y={9} /></Tool>
                </Segment>
                <Segment><Tool $w={34} aria-label="Orientation"><OrientIcon /><Caret w={6} /></Tool></Segment>
              </ToolRow>
              <ToolRow>
                <Segment>
                  <Tool aria-label="Align left"><Lines l={[19, 15, 19, 15, 19, 15]} y={2} c={0} /></Tool>
                  <Tool $on aria-label="Center"><Lines l={[19, 13, 19, 13, 19, 13]} y={2} /></Tool>
                  <Tool aria-label="Align right"><Lines l={[19, 15, 19, 15, 19, 15]} y={2} c={2} /></Tool>
                </Segment>
                <Segment>
                  <Tool aria-label="Decrease indent"><IndentIcon /></Tool>
                  <Tool aria-label="Increase indent"><IndentIcon r /></Tool>
                </Segment>
              </ToolRow>
            </Stack>
            <Divider />
            <Stack $gap={12}>
              <SmallButton><WrapIcon />Wrap Text</SmallButton>
              <SmallButton><MergeIcon />Merge &amp; Center<Caret w={6} /></SmallButton>
            </Stack>
          </GroupBody>
          <Label launch>Alignment</Label>
        </Group>

        <Group $w={149}>
          <GroupBody $tools>
            <Stack $gap={12}>
              <ToolRow><Drop label="Number format" w={142} value="Number" /></ToolRow>
              <ToolRow>
                <Segment>
                  <Tool $w={36} aria-label="Accounting format"><MoneyIcon /><Caret w={6} /></Tool>
                  <Tool aria-label="Percent"><PlainGlyph>%</PlainGlyph></Tool>
                  <Tool aria-label="Comma"><svg width="7" height="10" viewBox="0 0 7 10"><path d="M3.300 0a3 3 0 0 1 3 3.200C6.300 7 4 9 1 10c2-1.500 2.500-2.500 2.400-4A3 3 0 0 1 3.300 0z" fill="#111" /></svg></Tool>
                </Segment>
                <Segment>
                  <Tool aria-label="Increase decimal"><DecimalIcon /></Tool>
                  <Tool aria-label="Decrease decimal"><DecimalIcon r /></Tool>
                </Segment>
              </ToolRow>
            </Stack>
          </GroupBody>
          <Label launch>Number</Label>
        </Group>

        <Group>
          <GroupBody>
            <BigButton $w={73}><CondIcon /><BigLine>Conditional</BigLine><BigLine>Formatting<Caret w={6} /></BigLine></BigButton>
            <BigButton $w={62}><TableIcon /><BigLine>Format</BigLine><BigLine>as Table<Caret w={6} /></BigLine></BigButton>
            <Gallery>
              <StyleSwatch $bg="#fff" $fg="#111" $on>Normal</StyleSwatch>
              <StyleSwatch $bg="#ffc7ce" $fg="#a81016">Bad</StyleSwatch>
              <StyleSwatch $bg="#c6efce" $fg="#0b6b0b">Good</StyleSwatch>
              <StyleSwatch $bg="#ffeb9c" $fg="#a86f10">Neutral</StyleSwatch>
            </Gallery>
            <GalleryScroll>
              <PlainButton aria-label="Previous styles"><Arrow d="u" c="#a8a8a8" s={7} /></PlainButton>
              <PlainButton aria-label="Next styles"><Caret /></PlainButton>
              <PlainButton aria-label="More styles"><svg width="8" height="7" viewBox="0 0 8 7"><path d="M0 0h8v1.200H0zM0 3h8L4 7z" fill="#4c76b0" /></svg></PlainButton>
            </GalleryScroll>
          </GroupBody>
          <Label>Styles</Label>
        </Group>

        <Group $w={152}>
          <GroupBody>
            <BigButton $w={46}><InsertIcon /><BigLine>Insert</BigLine><BigLine><Caret /></BigLine></BigButton>
            <BigButton $w={50}><DeleteIcon /><BigLine>Delete</BigLine><BigLine><Caret /></BigLine></BigButton>
            <BigButton $w={48}><FormatIcon /><BigLine>Format</BigLine><BigLine><Caret /></BigLine></BigButton>
          </GroupBody>
          <Label>Cells</Label>
        </Group>

        <Group $w={196}>
          <GroupBody>
            <Stack>
              <SmallButton><SmallIcon><SumIcon /></SmallIcon>AutoSum<Caret w={6} /></SmallButton>
              <SmallButton><SmallIcon><FillDownIcon /></SmallIcon>Fill<Caret w={6} /></SmallButton>
              <SmallButton><SmallIcon><EraserIcon /></SmallIcon>Clear<Caret w={6} /></SmallButton>
            </Stack>
            <BigButton $w={58}><SortIcon /><BigLine>Sort &amp;</BigLine><BigLine>Filter<Caret w={6} /></BigLine></BigButton>
            <BigButton $w={44}><FindIcon /><BigLine>Find &amp;</BigLine><BigLine>Select<Caret w={6} /></BigLine></BigButton>
          </GroupBody>
          <Label>Editing</Label>
        </Group>
      </Ribbon>

      <FormulaBar>
        <NameBox>
          <input aria-label="Name box" defaultValue="E56" />
          <button aria-label="Open name list"><Caret c="#111" w={9} /></button>
        </NameBox>
        <FxArea><FxKnob /><FxButton>f<small>x</small></FxButton></FxArea>
        <FormulaInput aria-label="Formula" defaultValue="=D54*D55*E53/1000" />
        <ExpandButton aria-label="Expand formula bar"><svg width="10" height="12" viewBox="0 0 10 12" fill="none" stroke="#111" strokeWidth="2.200"><path d="M1 1l4 3.500L9 1M1 6.500L5 10l4-3.500" /></svg></ExpandButton>
      </FormulaBar>

      <SheetArea>
        <GridPane>
          <Grid>
            <colgroup><col width={33} />{COLS.map(([c, w]) => <col key={c} width={w} />)}</colgroup>
            <thead><tr><Corner aria-label="Select all" />{COLS.map(([c]) => <ColHead key={c} scope="col" $on={c === 'E'}>{c}</ColHead>)}</tr></thead>
            <tbody>{Array.from({ length: 24 }, (_, i) => <SheetRow key={i} n={37 + i} />)}</tbody>
          </Grid>
        </GridPane>
        <VScroll>
          <VSplit />
          <ArrowButton aria-label="Scroll up"><Arrow d="u" /></ArrowButton>
          <Track $n={264} />
          <VThumb $n={168}><svg width="8" height="6" viewBox="0 0 8 6"><path d="M0 .5h8M0 3h8M0 5.500h8" stroke="#8a93a3" /></svg></VThumb>
          <Track $n={118} />
          <ArrowButton aria-label="Scroll down"><Arrow d="d" /></ArrowButton>
        </VScroll>
      </SheetArea>

      <SheetBar>
        <TabsPane>
          <SheetNav>
            <ArrowButton aria-label="First sheet"><svg width="8" height="10" viewBox="0 0 8 10"><path d="M0 0h1.500v10H0zM8 0v10L2.500 5z" fill="#1c4591" /></svg></ArrowButton>
            <ArrowButton aria-label="Previous sheet"><Arrow d="l" c="#1c4591" s={10} /></ArrowButton>
            <ArrowButton aria-label="Next sheet"><Arrow d="r" c="#1c4591" s={10} /></ArrowButton>
            <ArrowButton aria-label="Last sheet"><svg width="8" height="10" viewBox="0 0 8 10"><path d="M6.500 0H8v10H6.500zM0 0v10l5.500-5z" fill="#1c4591" /></svg></ArrowButton>
          </SheetNav>
          <SheetTab $w={73} $active>Sheet1</SheetTab>
          <SheetTab $w={68}>Sheet2</SheetTab>
          <SheetTab $w={68}>Sheet3</SheetTab>
          <NewSheetTab $w={26} aria-label="Insert worksheet">
            <svg width="19" height="15" viewBox="0 0 19 15"><path d="M5 3h13v9l-3 2.500H5z" fill="#dfe4f2" stroke="#68758f" /><circle cx="4.500" cy="4.500" r="2.700" fill="#fff" stroke="#e08b1c" strokeWidth="1.800" /><path d="M4.500 0v9M0 4.500h9" stroke="#e08b1c" strokeDasharray="1.500 6" /></svg>
          </NewSheetTab>
        </TabsPane>
        <HScroll>
          <HSplit />
          <ArrowButton aria-label="Scroll left"><Arrow d="l" /></ArrowButton>
          <HThumb $n={501}><svg width="7" height="7" viewBox="0 0 7 7"><path d="M.5 0v7M3 0v7M5.500 0v7" stroke="#8a93a3" /></svg></HThumb>
          <Track $n={69} />
          <ArrowButton aria-label="Scroll right"><Arrow d="r" /></ArrowButton>
          <HSplit />
        </HScroll>
        <ScrollCorner />
      </SheetBar>

      <StatusBar>
        <StatusText>Ready</StatusText>
        <ZoomArea>
          <ViewButtons>
            <ViewButton $on aria-label="Normal view"><svg width="17" height="13" viewBox="0 0 17 13"><path d="M.7.700h15.600v11.600H.7zM6 1v11M11 1v11M1 4.500h15M1 8.500h15" fill="#fff" stroke="#665c4c" strokeWidth="1.400" /></svg></ViewButton>
            <ViewButton aria-label="Page layout view"><svg width="16" height="15" viewBox="0 0 16 15"><path d="M1 1h14v13H1z" fill="#aab0ba" stroke="#5e6674" strokeWidth="1.500" /><path d="M4.500 3.500h7v8h-7z" fill="#fff" stroke="#5e6674" /><path d="M6 6h4M6 8.500h4" stroke="#777" /></svg></ViewButton>
            <ViewButton aria-label="Page break view"><svg width="16" height="15" viewBox="0 0 16 15"><path d="M1 1h14v13H1z" fill="#a5a9b2" stroke="#5e6674" strokeWidth="1.500" /><path d="M2 2h4v7H2zM8 2h4v6H8z" fill="#fff" stroke="#5e6674" strokeWidth=".7" /></svg></ViewButton>
          </ViewButtons>
          100%
          <ZoomButton aria-label="Zoom out"><ZoomIcon /></ZoomButton>
          <ZoomSlider type="range" aria-label="Zoom" min={0} max={100} defaultValue={51} />
          <ZoomButton aria-label="Zoom in"><ZoomIcon plus /></ZoomButton>
        </ZoomArea>
      </StatusBar>

      <Taskbar>
        <TaskGroup>
          <TaskButton $w={60} aria-label="Start"><svg width="20" height="20" viewBox="0 0 20 20" fill="#fff"><path d="M0 3l8.500-1.200v7.700H0zM9.500 1.600L20 0v9.500H9.500zM0 10.500h8.500v7.700L0 17zM9.500 10.500H20V20L9.500 18.400z" /></svg></TaskButton>
          <SearchBox>
            <svg width="21" height="21" viewBox="0 0 21 21" fill="none" stroke="#222" strokeWidth="1.500"><circle cx="13" cy="8" r="6.800" /><path d="M8 13l-8 7.500" /></svg>
            <input aria-label="Search" placeholder="Type here to search" />
            <Poppies />
          </SearchBox>
          <TaskButton $w={60} aria-label="Cortana"><CortanaIcon /></TaskButton>
          <TaskButton $w={60} aria-label="Task view"><TaskViewIcon /></TaskButton>
          <TaskButton $w={66} aria-label="File Explorer"><FolderIcon /></TaskButton>
          <TaskButton $w={60} aria-label="Store"><StoreIcon /></TaskButton>
          <TaskButton $w={64} aria-label="Mail"><MailIcon /></TaskButton>
          <TaskButton $w={62} aria-label="Edge"><EdgeIcon /></TaskButton>
          <TaskButton $w={62} aria-label="Word"><OfficeDoc k="W" /></TaskButton>
          <TaskButton $w={62} $on $line aria-label="Excel"><OfficeDoc k="X" /></TaskButton>
          <TaskButton $w={62} $line aria-label="Secure browser"><BrowserIcon a="#2795ee" b="#e3205a" c="#f8b830" /></TaskButton>
          <TaskButton $w={62} aria-label="Browser"><BrowserIcon a="#f77a1a" b="#7a45e8" c="#f8c52e" /></TaskButton>
        </TaskGroup>
        <TaskGroup>
          <Weather><WeatherIcon />13°C</Weather>
          <Tray>
            <button aria-label="Hidden icons"><svg width="16" height="9" viewBox="0 0 16 9"><path d="M.7 8.500L8 1l7.300 7.500" fill="none" stroke="#fff" strokeWidth="1.400" /></svg></button>
            <button aria-label="Meet now"><svg width="15" height="19" viewBox="0 0 15 19" fill="none" stroke="#e3e6ea" strokeWidth="1.300"><rect x="1" y="4.500" width="8" height="10" rx="2" /><path d="M9 8.500L13.500 6v7.500L9 11M3 1.500q4-1.500 8 0M3 17.500q4 1.500 8 0" /></svg></button>
            <button aria-label="OneDrive"><svg width="20" height="14" viewBox="0 0 20 14"><path d="M4 13.500c-5 0-5-7 0-7C6 0 14-1 15 5.500c6 0 6 8 1 8z" fill="#c9ccd1" /><path d="M4 13.500c-4 0-5-5-1-6.500l7-1 7 7z" fill="#fff" /></svg></button>
            <button aria-label="Updates"><svg width="21" height="20" viewBox="0 0 21 20"><path d="M1 3.500L19.500 1v15L1 17.500z" fill="none" stroke="#dfe3e8" strokeWidth="1.300" /><path d="M6 9c1-3 5-3 6-1V5.500M12.500 11c-1 3-5 3-6 1v2.500" fill="none" stroke="#dfe3e8" strokeWidth="1.300" /><circle cx="16" cy="15" r="4.500" fill="#ff9414" /></svg></button>
            <button aria-label="Network"><svg width="17" height="17" viewBox="0 0 17 17" fill="none" stroke="#c3c9d2" strokeWidth="1.400"><path d="M1 16C1 8 8 1 16 1M5 16c0-6 5-11 11-11M9 16c0-4 3-7 7-7" /><circle cx="14.500" cy="14.500" r="1.500" fill="#fff" stroke="none" /></svg></button>
          </Tray>
          <Lang>ENG</Lang>
          <Clock>21:44<br />10/06/2022</Clock>
          <PlainButton aria-label="Notifications"><svg width="21" height="21" viewBox="0 0 21 21"><path d="M.7 1.500h19.600v14h-7L10 19l-3.300-3.500h-6z" fill="none" stroke="#e8eaed" strokeWidth="1.400" /></svg></PlainButton>
          <ShowDesktop />
        </TaskGroup>
      </Taskbar>
    </Window>
  );
}
